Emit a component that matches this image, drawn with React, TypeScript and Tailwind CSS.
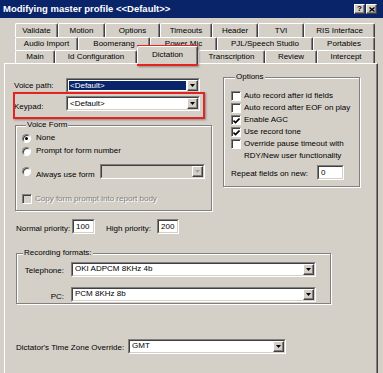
import React from 'react';

const sunkenOuter = 'border border-t-[#808080] border-l-[#808080] border-r-white border-b-white';
const sunkenInner = 'border border-t-[#404040] border-l-[#404040] border-r-[#d4d0c8] border-b-[#d4d0c8]';
const raised =
  'border border-t-white border-l-white border-r-[#404040] border-b-[#404040] shadow-[inset_-1px_-1px_0_#808080]';
const etched = 'border border-[#808080] shadow-[inset_1px_1px_0_#fff,1px_1px_0_#fff]';

function Arrow({ disabled }: { disabled?: boolean }) {
  return (
    <div className={`flex h-full w-[11px] shrink-0 items-center justify-center bg-[#d4d0c8] ${raised}`}>
      <svg width="5" height="3" viewBox="0 0 5 3">
        <path d="M0 0h5L2.5 3z" fill={disabled ? '#a0a0a0' : '#000'} />
      </svg>
    </div>
  );
}

function Combo({
  value,
  className = '',
  selected,
  disabled,
}: {
  value?: string;
  className?: string;
  selected?: boolean;
  disabled?: boolean;
}) {
  return (
    <div className={`flex h-[15px] ${sunkenOuter} ${className}`}>
      <div className={`flex flex-1 ${sunkenInner} ${disabled ? 'bg-[#d4d0c8]' : 'bg-white'}`}>
        <div className="flex flex-1 p-px">
          <div className={`flex flex-1 items-center pl-px leading-none ${selected ? 'bg-[#0a246a] text-white' : ''}`}>
            {value}
          </div>
        </div>
        <Arrow disabled={disabled} />
      </div>
    </div>
  );
}

function TextBox({ value, className = '' }: { value: string; className?: string }) {
  return (
    <div className={`flex h-[15px] ${sunkenOuter} ${className}`}>
      <div className={`flex-1 bg-white pl-[2px] pt-px leading-[9px] ${sunkenInner}`}>{value}</div>
    </div>
  );
}

function Check({ checked, disabled }: { checked?: boolean; disabled?: boolean }) {
  return (
    <div className={`h-[10px] w-[10px] shrink-0 ${sunkenOuter}`}>
      <div className={`flex h-full w-full items-center justify-center border-t border-l border-[#404040] ${disabled ? 'bg-[#d4d0c8]' : 'bg-white'}`}>
        {checked && (
          <svg width="7" height="6" viewBox="0 0 7 6">
            <path d="M0.5 2.5L2.5 4.5L6.5 0.5" stroke="#000" strokeWidth="1.6" fill="none" />
          </svg>
        )}
      </div>
    </div>
  );
}

function Radio({ checked }: { checked?: boolean }) {
  return (
    <div className="flex h-[9px] w-[9px] shrink-0 items-center justify-center rounded-full border border-t-[#808080] border-l-[#808080] border-r-white border-b-white bg-white shadow-[inset_1px_1px_0_#404040]">
      {checked && <div className="h-[3px] w-[3px] rounded-full bg-black" />}
    </div>
  );
}

function Tab({ label, w, selected }: { label: string; w: string; selected?: boolean }) {
  return (
    <div
      className={`flex items-center justify-center rounded-t-[2px] border-t border-l border-r border-t-white border-l-white border-r-[#404040] bg-[#d4d0c8] shadow-[inset_-1px_0_0_#808080] ${w} ${
        selected ? 'relative z-10 -mb-px h-[18px] pb-[2px]' : 'h-full'
      }`}
    >
      {label}
    </div>
  );
}

function OptionRow({ label, checked }: { label: React.ReactNode; checked?: boolean }) {
  return (
    <div className="flex items-start gap-[3px]">
      <Check checked={checked} />
      <span className="leading-[10px]">{label}</span>
    </div>
  );
}

export default function App() {
  return (
    <div className="relative h-[373px] w-[383px] overflow-hidden bg-[#d4d0c8] font-['Liberation_Sans',Arial,sans-serif] text-[8px] text-black">
      {/* title bar */}
      <div className="flex h-[18px] items-center justify-between bg-[#0a246a] pl-[3px] pr-[6px]">
        <span className="text-[9.5px] font-bold text-white">Modifying master profile &lt;&lt;Default&gt;&gt;</span>
        <div className="flex gap-px">
          <div className={`flex h-[10px] w-[11px] items-center justify-center bg-[#d4d0c8] text-[8px] font-bold leading-none ${raised}`}>?</div>
          <div className={`flex h-[10px] w-[11px] items-center justify-center bg-[#d4d0c8] ${raised}`}>
            <svg width="6" height="5" viewBox="0 0 6 5">
              <path d="M0.5 0.5L5.5 4.5M5.5 0.5L0.5 4.5" stroke="#000" strokeWidth="1.4" />
            </svg>
          </div>
        </div>
      </div>

      {/* tabs */}
      <div className="mt-[5px] pl-[15px]">
        <div className="flex h-[14px]">
          <Tab label="Validate" w="w-[43px]" />
          <Tab label="Motion" w="w-[47px]" />
          <Tab label="Options" w="w-[55px]" />
          <Tab label="Timeouts" w="w-[52px]" />
          <Tab label="Header" w="w-[46px]" />
          <Tab label="TVI" w="w-[46px]" />
          <Tab label="RIS Interface" w="w-[71px]" />
        </div>
        <div className="flex h-[13px]">
          <Tab label="Audio Import" w="w-[63px]" />
          <Tab label="Boomerang" w="w-[72px]" />
          <Tab label="Power Mic" w="w-[67px]" />
          <Tab label="PJL/Speech Studio" w="w-[96px]" />
          <Tab label="Portables" w="w-[62px]" />
        </div>
        <div className="flex h-[13px] items-end">
          <Tab label="Main" w="w-[40px]" />
          <Tab label="Id Configuration" w="w-[82px]" />
          <Tab label="Dictation" w="w-[61px]" selected />
          <Tab label="Transcription" w="w-[67px]" />
          <Tab label="Review" w="w-[52px]" />
          <Tab label="Intercept" w="w-[58px]" />
        </div>
      </div>

      {/* page */}
      <div className="ml-[4px] h-[320px] w-[374px] border-t border-l border-r border-t-white border-l-white border-r-[#404040] shadow-[inset_-1px_0_0_#808080]">
        <div className="flex items-start">
          {/* left column */}
          <div className="ml-[9px] flex w-[198px] flex-col">
            <div className="mt-[14px] flex h-[15px] items-center">
              <span className="w-[52px]">Voice path:</span>
              <Combo value="<Default>" selected className="w-[134px]" />
            </div>
            <div className="mt-[3px] flex h-[15px] items-center">
              <span className="w-[52px] pt-[6px]">Keypad:</span>
              <Combo value="<Default>" className="w-[134px]" />
            </div>
            <fieldset className={`ml-px mt-[9px] h-[91px] w-[197px] px-[6px] ${etched}`}>
              <legend className="ml-[4px] bg-[#d4d0c8] px-px leading-[10px]">Voice Form</legend>
              <div className="mt-[3px] flex h-[10px] items-center gap-[5px]">
                <Radio checked />
                <span>None</span>
              </div>
              <div className="mt-[3px] flex h-[10px] items-center gap-[5px]">
                <Radio />
                <span>Prompt for form number</span>
              </div>
              <div className="mt-[8px] flex h-[15px] items-center gap-[5px]">
                <Radio />
                <span className="pt-[6px]">Always use form</span>
                <Combo disabled className="ml-auto w-[105px]" />
              </div>
              <div className="mt-[15px] flex h-[10px] items-center gap-[3px]">
                <Check disabled />
                <span className="text-[#808080] [text-shadow:1px_1px_0_#fff]">Copy form prompt into report body</span>
              </div>
            </fieldset>
          </div>

          {/* right column */}
          <fieldset className={`ml-[11px] mt-[8px] h-[115px] w-[137px] px-[7px] ${etched}`}>
            <legend className="ml-[4px] bg-[#d4d0c8] px-px leading-[10px]">Options</legend>
            <div className="mt-[9px] flex flex-col gap-[2px]">
              <OptionRow label="Auto record after id fields" />
              <OptionRow label="Auto record after EOF on play" />
              <OptionRow label="Enable AGC" checked />
              <OptionRow label="Use record tone" checked />
              <div className="flex items-start gap-[3px]">
                <Check />
                <span className="leading-[12px] -mt-px">
                  Override pause timeout with
                  <br />
                  RDY/New user functionality
                </span>
              </div>
            </div>
            <div className="mt-[3px] flex h-[14px] items-center">
              <span className="w-[86px] pt-[4px]">Repeat fields on new:</span>
              <TextBox value="0" className="h-[14px] w-[27px]" />
            </div>
          </fieldset>
        </div>

        {/* priorities */}
        <div className="ml-[11px] mt-[8px] flex h-[15px] items-center">
          <span className="w-[56px] pt-[5px]">Normal priority:</span>
          <TextBox value="100" className="w-[23px]" />
          <span className="ml-[11px] w-[51px] pt-[5px]">High priority:</span>
          <TextBox value="200" className="w-[22px]" />
        </div>

        {/* recording formats */}
        <fieldset className={`ml-[11px] mt-[14px] w-[315px] px-[5px] pb-[2px] ${etched}`}>
          <legend className="ml-[1px] bg-[#d4d0c8] px-px leading-[10px]">Recording formats:</legend>
          <div className="mt-[4px] flex h-[14px] items-center">
            <span className="w-[42px] pt-[3px] text-right">Telephone:</span>
            <Combo value="OKI ADPCM 8KHz 4b" className="ml-[7px] h-[14px] w-[245px]" />
          </div>
          <div className="mt-[11px] flex h-[14px] items-center">
            <span className="w-[42px] pt-[6px] text-right">PC:</span>
            <Combo value="PCM 8KHz 8b" className="ml-[7px] h-[14px] w-[245px]" />
          </div>
        </fieldset>

        {/* time zone */}
        <div className="ml-[11px] mt-[35px] flex h-[14px] items-center">
          <span className="w-[112px] pt-[3px]">Dictator&apos;s Time Zone Override:</span>
          <Combo value="GMT" className="h-[14px] w-[158px]" />
        </div>
      </div>

      {/* red annotation boxes */}
      <div className="absolute left-[137px] top-[45px] h-[21px] w-[61px] border-2 border-[#e52421] shadow-[1px_1px_2px_rgba(0,0,0,0.35)]" />
      <div className="absolute left-[13px] top-[92px] h-[27px] w-[192px] border-2 border-[#e52421] shadow-[1px_1px_2px_rgba(0,0,0,0.35)]" />
    </div>
  );
}
